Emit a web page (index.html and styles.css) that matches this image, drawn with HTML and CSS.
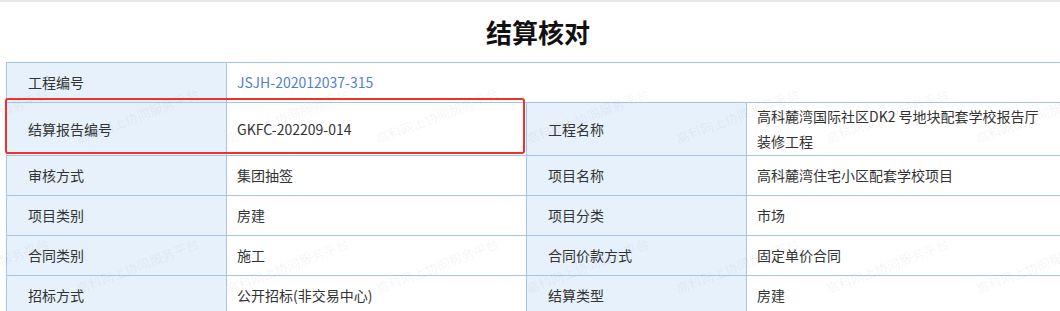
FILE: index.html
```html
<!DOCTYPE html>
<html lang="zh-CN">
<head>
  <meta charset="UTF-8">
  <title>结算核对</title>
  <meta name="viewport" content="width=device-width, initial-scale=1.0">
  <link rel="stylesheet" href="styles.css">
</head>
<body>
  <div class="top-strip"></div>
  <h1 class="page-title">结算核对</h1>

  <div class="sheet">
    <table class="info-table">
      <colgroup>
        <col class="c-label">
        <col class="c-value">
        <col class="c-label">
        <col class="c-wide">
      </colgroup>
      <tr>
        <th>工程编号</th>
        <td colspan="3"><a class="code-link" href="#">JSJH-202012037-315</a></td>
      </tr>
      <tr class="tall">
        <th>结算报告编号</th>
        <td>GKFC-202209-014</td>
        <th>工程名称</th>
        <td class="last">高科麓湾国际社区DK2 号地块配套学校报告厅装修工程</td>
      </tr>
      <tr>
        <th>审核方式</th>
        <td>集团抽签</td>
        <th>项目名称</th>
        <td class="last">高科麓湾住宅小区配套学校项目</td>
      </tr>
      <tr>
        <th>项目类别</th>
        <td>房建</td>
        <th>项目分类</th>
        <td class="last">市场</td>
      </tr>
      <tr>
        <th>合同类别</th>
        <td>施工</td>
        <th>合同价款方式</th>
        <td class="last">固定单价合同</td>
      </tr>
      <tr>
        <th>招标方式</th>
        <td>公开招标(非交易中心)</td>
        <th>结算类型</th>
        <td class="last">房建</td>
      </tr>
    </table>

    <!-- 水印 -->
    <div class="watermark" id="watermark"></div>

    <!-- 标注框 -->
    <div class="mark-box"></div>
  </div>

  <script>
    // 平铺水印文字
    const wm = document.getElementById('watermark');
    [68, 218].forEach(top => {
      for (let left = -70; left < 1100; left += 150) {
        const s = document.createElement('span');
        s.textContent = '高科网上协同服务平台';
        s.style.left = left + 'px';
        s.style.top = top + 'px';
        wm.appendChild(s);
      }
    });
  </script>
</body>
</html>
```

FILE: styles.css
```css
html, body {
  margin: 0; padding: 0;
  background: #fff;
  font-family: 'Microsoft YaHei', 'Noto Sans CJK SC', sans-serif;
  color: #333;
  overflow: hidden;
}
.top-strip {
  height: 2px;
  background: #e6e6e6;
}
.page-title {
  margin: 0;
  height: 60px;
  line-height: 60px;
  text-align: center;
  font-size: 26px;
  font-weight: 700;
  color: #111;
  padding-left: 16px;
}
.sheet {
  position: relative;
  padding-left: 6px;
}
.info-table {
  width: 1060px;
  table-layout: fixed;
  border-collapse: collapse;
  font-size: 14px;
  line-height: 25px;
}
.c-label { width: 220px; }
.c-value { width: 300px; }
.c-wide { width: 320px; }
.info-table th,
.info-table td {
  border: 1px solid #a4c5e6;
  height: 40px;
  padding: 1px 10px;
  box-sizing: border-box;
  text-align: left;
  vertical-align: middle;
  font-weight: 400;
}
.info-table td.last { padding-right: 20px; }
.info-table th {
  background: #e6f1fb;
  padding-left: 21px;
}
.info-table tr.tall td,
.info-table tr.tall th { height: 53px; }
.code-link {
  color: #4f7fd6;
  text-decoration: none;
}
.watermark {
  position: absolute;
  left: 0; top: 0; right: 0; bottom: 0;
  pointer-events: none;
  overflow: hidden;
}
.watermark span {
  position: absolute;
  font-size: 13px;
  line-height: 18px;
  color: rgba(0,0,0,0.06);
  white-space: nowrap;
  transform: rotate(-21deg);
  transform-origin: left bottom;
}
.mark-box {
  position: absolute;
  left: 5px; top: 36px;
  width: 516px; height: 52px;
  border: 2.5px solid #f2302a;
  border-radius: 3px;
  pointer-events: none;
}
```
